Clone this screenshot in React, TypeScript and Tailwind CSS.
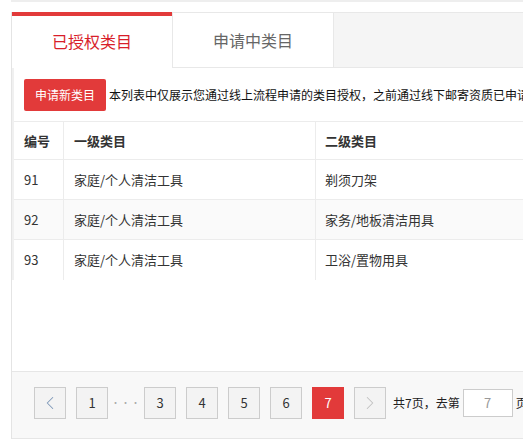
import { ChevronLeft, ChevronRight } from "lucide-react";

type Row = {
    id: number;
    first: string;
    second: string;
};

const rows: Row[] = [
    { id: 91, first: "家庭/个人清洁工具", second: "剃须刀架" },
    { id: 92, first: "家庭/个人清洁工具", second: "家务/地板清洁用具" },
    { id: 93, first: "家庭/个人清洁工具", second: "卫浴/置物用具" },
];

const font = {
    fontFamily: '"Noto Sans CJK SC", "Liberation Sans", sans-serif',
};

function PageButton({ label, active }: { label: string; active?: boolean }) {
    if (active) {
        return (
            <div className="flex h-[32px] w-[32px] items-center justify-center bg-[#e23a3a] text-[13px] text-white">
                {label}
            </div>
        );
    }
    return (
        <div className="flex h-[32px] w-[32px] items-center justify-center border border-[#cccccc] bg-[#f3f3f3] text-[13px] text-[#333]">
            {label}
        </div>
    );
}

function Tabs() {
    return (
        <div className="flex h-[56px]">
            <div className="flex w-[160px] items-center justify-center border-t-4 border-[#e23a3a] bg-white pb-[2px] text-[16px] text-[#d81e2a]">
                已授权类目
            </div>
            <div className="flex w-[162px] items-center justify-center border border-[#e8e8e8] bg-white text-[16px] text-[#666]">
                申请中类目
            </div>
            <div className="flex-1 border-y border-[#e8e8e8] bg-[#f5f5f5]" />
        </div>
    );
}

function CategoryTable() {
    return (
        <div className="text-[13px] text-[#333]">
            <div className="flex h-[39px] border-y border-[#ececec] font-bold">
                <div className="flex w-[50px] items-center border-r border-[#ececec] pl-[10px]">
                    编号
                </div>
                <div className="flex w-[252px] items-center border-r border-[#ececec] pl-[10px]">
                    一级类目
                </div>
                <div className="flex flex-1 items-center pl-[9px]">二级类目</div>
            </div>
            {rows.map((row, i) => (
                <div
                    key={row.id}
                    className={
                        i === 1
                            ? "flex h-[40px] border-b border-[#ececec] bg-[#fafafa]"
                            : i === rows.length - 1
                              ? "flex h-[40px] bg-white"
                              : "flex h-[40px] border-b border-[#ececec] bg-white"
                    }
                >
                    <div className="flex w-[50px] items-center border-r border-[#ececec] pl-[10px]">
                        {row.id}
                    </div>
                    <div className="flex w-[252px] items-center border-r border-[#ececec] pl-[10px]">
                        {row.first}
                    </div>
                    <div className="flex flex-1 items-center pl-[9px]">
                        {row.second}
                    </div>
                </div>
            ))}
        </div>
    );
}

function Pagination() {
    return (
        <div className="flex h-[68px] items-start gap-[10px] border-y border-[#e6e6e6] bg-[#f8f8f8] pl-[22px] pt-[15px]">
            <div className="flex h-[32px] w-[32px] items-center justify-center border border-[#cccccc] bg-[#f3f3f3] text-[#7d98b8]">
                <ChevronLeft size={22} strokeWidth={1.1} />
            </div>
            <PageButton label="1" />
            <div className="flex h-[32px] w-[16px] items-center justify-center text-[9px] tracking-[1px] text-[#aaa]">
                ···
            </div>
            <PageButton label="3" />
            <PageButton label="4" />
            <PageButton label="5" />
            <PageButton label="6" />
            <PageButton label="7" active />
            <div className="flex h-[32px] w-[32px] items-center justify-center border border-[#cccccc] bg-[#f3f3f3] text-[#c0c0c0]">
                <ChevronRight size={22} strokeWidth={1.1} />
            </div>
            <div className="-ml-[3px] flex h-[32px] items-center gap-[3px] text-[12px] text-[#222]">
                <span>共7页，去第</span>
                <div className="flex h-[28px] w-[50px] items-center justify-center border border-[#cccccc] bg-white text-[13px] text-[#999]">
                    7
                </div>
                <span>页</span>
            </div>
        </div>
    );
}

export default function App() {
    return (
        <div className="h-[440px] w-[523px] overflow-hidden bg-white" style={font}>
            <div className="w-[1000px]">
                <div className="ml-[11px] h-[2px] bg-[#eeeeee]" />
                <div className="ml-[11px] mt-[10px] border-l border-[#e4e4e4]">
                    <Tabs />
                    <div className="border-l-2 border-[#f0f0f0]">
                        <div className="flex h-[53px] items-start pl-[10px] pt-[11px]">
                            <button className="h-[32px] rounded-[2px] bg-[#e23a3a] px-[11px] text-[12px] text-white">
                                申请新类目
                            </button>
                            <span className="ml-[3px] mt-[7px] text-[12px] text-[#111]">
                                本列表中仅展示您通过线上流程申请的类目授权，之前通过线下邮寄资质已申请的类目授权请联系客服查询。
                            </span>
                        </div>
                        <CategoryTable />
                    </div>
                    <div className="h-[91px] bg-white" />
                    <Pagination />
                </div>
            </div>
        </div>
    );
}
